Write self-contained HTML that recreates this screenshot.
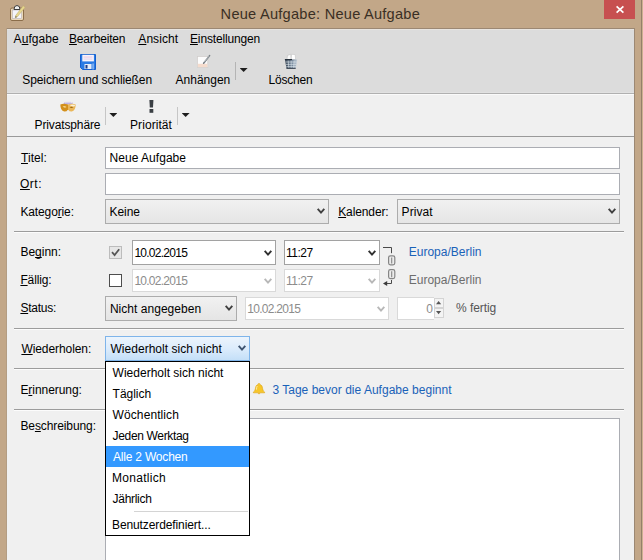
<!DOCTYPE html>
<html><head><meta charset="utf-8">
<style>
*{box-sizing:border-box;margin:0;padding:0}
html,body{width:643px;height:560px;overflow:hidden;background:#c2a788;font-family:"Liberation Sans",sans-serif;font-size:12px;color:#000}
.a{position:absolute}
.t{position:absolute;white-space:nowrap;line-height:20px;height:20px;font-size:12px;color:#000}
u{text-decoration:underline;text-underline-offset:1px;text-decoration-skip-ink:none;text-decoration-thickness:1px}
.inp{position:absolute;background:#fff;border:1px solid #abadb3}
.sel{position:absolute;background:linear-gradient(#f1f1f1,#e5e5e5);border:1px solid #acacac}
.hl{position:absolute;height:2px;background:#9c9c9c;border-bottom:1px solid #fcfcfc;left:14px;width:610px}
.arr{position:absolute;width:8px;height:4px;background:#1e1e1e;clip-path:polygon(0 0,100% 0,50% 100%)}
svg{position:absolute;overflow:visible}
</style></head><body>
<!-- frame -->
<div class="a" style="left:641px;top:0;width:1px;height:560px;background:#94806b"></div>
<div class="a" style="left:642px;top:0;width:1px;height:560px;background:#cdb191"></div>
<div class="a" style="left:6px;top:28px;width:629px;height:532px;background:#9c8873"></div>
<div class="a" style="left:6px;top:28px;width:1px;height:532px;background:#b39d83"></div>
<div class="a" id="close" style="left:604px;top:0;width:31px;height:19px;background:#c75050"></div>
<svg style="left:616px;top:6px" width="8" height="7" viewBox="0 0 8 7"><path d="M0.6,0.3 L7.4,6.7 M7.4,0.3 L0.6,6.7" stroke="#fff" stroke-width="1.7" fill="none"/></svg>
<!-- title icon -->
<svg style="left:10px;top:5px" width="15" height="16" viewBox="0 0 15 16">
<rect x="0.5" y="3" width="13" height="12.5" rx="1.5" fill="#ead8b8" stroke="#8b6d4a" stroke-width="1"/>
<rect x="2.5" y="5" width="9" height="8.5" fill="#f4f4fa" stroke="#b9b2b8" stroke-width="0.6"/>
<path d="M4,4.5 Q4,0.5 7,0.5 Q10,0.5 10,4.5 Z" fill="#f0f0f0" stroke="#3c3c3c" stroke-width="1"/>
<path d="M13.2,0.8 L5.6,10.6 L5.2,12.8 L7.2,12 L15,2.4 Z" fill="#e8d88f" stroke="#bcab6c" stroke-width="0.5"/>
<path d="M5.2,12.8 L5.7,10.9 L7,11.9 Z" fill="#555"/>
</svg>
<!-- content -->
<div class="a" style="left:7px;top:29px;width:627px;height:64px;background:#dcdcdc"></div>
<div class="a" style="left:7px;top:29px;width:627px;height:1px;background:#e7e4e0"></div>
<div class="a" style="left:7px;top:92px;width:627px;height:1px;background:#e1e1e1"></div><div class="a" style="left:7px;top:93px;width:627px;height:1px;background:#b0b0b0"></div>
<div class="a" style="left:7px;top:94px;width:627px;height:42px;background:#f0f0f0;border-top:1px solid #fafafa"></div>
<div class="a" style="left:7px;top:136px;width:627px;height:1px;background:#9a9a9a"></div>
<div class="a" style="left:7px;top:137px;width:627px;height:423px;background:#f0f0f0"></div>
<!-- toolbar1 icons -->
<svg style="left:80px;top:54px" width="16" height="16" viewBox="0 0 16 16">
<path d="M0.5,0.5 H15.5 V15.5 H2.5 L0.5,13.5 Z" fill="#2a7be4" stroke="#1560cf" stroke-width="1"/>
<rect x="2.3" y="0.8" width="11.6" height="6.6" fill="#f8f4fb"/>
<rect x="3.5" y="2.6" width="9" height="0.9" fill="#e4bfe0"/>
<rect x="3.5" y="4.6" width="9" height="0.9" fill="#d9cdea"/>
<rect x="4.5" y="10" width="7" height="5" fill="#e6edf8"/>
<rect x="5.5" y="11" width="2" height="3.5" fill="#1c3f8c"/>
<rect x="12.6" y="9.5" width="0.9" height="6" fill="#cfe2fb"/>
</svg>
<svg style="left:197px;top:55px" width="14" height="13" viewBox="0 0 14 13">
<rect x="0.4" y="1.4" width="10.4" height="11" fill="#fcfcfc" stroke="#d2cfcd" stroke-width="0.8"/>
<rect x="0.8" y="8.8" width="9.6" height="3.3" fill="#f5dccd"/>
<path d="M12.6,0.6 L6.6,8.2" stroke="#70777d" stroke-width="1.5" fill="none" stroke-linecap="round"/>
<path d="M12.2,0.9 L7.2,7.2" stroke="#e8ecef" stroke-width="0.5" fill="none"/>
</svg>
<svg style="left:284px;top:54px" width="15" height="15" viewBox="0 0 15 15">
<defs><linearGradient id="bk" x1="0" x2="1" y1="0" y2="0"><stop offset="0" stop-color="#3c4957"/><stop offset="0.55" stop-color="#6f8297"/><stop offset="1" stop-color="#c3ced8"/></linearGradient></defs>
<path d="M3,5.6 L3.4,1.4 L6.8,0.2 L7.2,5.6 Z" fill="#fafafa" stroke="#bdbdbd" stroke-width="0.6"/>
<path d="M7.2,5.6 L7.5,0.3 L11.2,0.6 L11.6,5.6 Z" fill="#ffffff" stroke="#c2c2c2" stroke-width="0.6"/>
<path d="M0.9,5.4 H13.3 L11.7,14.6 H2.5 Z" fill="url(#bk)"/>
<path d="M0.9,5.6 H8" stroke="#27313c" stroke-width="1.2"/>
<path d="M4.2,6.6 L4.8,14 M7.2,6.6 V14 M10.2,6.6 L9.6,14" stroke="#dfe7ee" stroke-width="0.8" fill="none" opacity="0.75"/>
<path d="M1.6,8 H12.8 M2,10.4 H12.4 M2.4,12.6 H12" stroke="#dfe7ee" stroke-width="0.8" fill="none" opacity="0.75"/>
<path d="M2.5,14.4 H11.7" stroke="#2f3a47" stroke-width="0.9"/>
</svg>
<div class="a" style="left:235px;top:62px;width:1px;height:18px;background:#b4b4b4"></div>
<div class="arr" style="left:239.6px;top:68px"></div>
<!-- toolbar2 icons -->
<svg style="left:60px;top:101px" width="16" height="11" viewBox="0 0 16 11">
<path d="M3.6,3.4 L4.2,1 L5.2,2.8 L6,0.4 L7,2.8 L8,0.4 L9,2.8 L10,0.4 L11,2.8 L12.2,1 L12.8,3.4 Z" fill="#b3a4de" opacity="0.9"/>
<path d="M0.3,3.4 Q4,2 8,3.6 L8,8.4 Q6.6,10.8 4.2,10.6 Q0.4,9.6 0.3,3.4 Z" fill="#d3901c"/>
<path d="M8,3.6 Q12,2 15.7,3.4 Q15.6,9.6 11.8,10.6 Q9.4,10.8 8,8.4 Z" fill="#eab75a"/>
<path d="M9.4,4 Q12.6,2.8 15.2,4 Q14.6,6 12.4,5.4 Q10.6,4.6 9.4,4 Z" fill="#fbf1d8"/>
<path d="M2.6,5.6 Q4.4,4.4 6.6,6 Q4.6,7.6 2.6,5.6 Z" fill="#f3d58e"/>
<path d="M9.6,6.2 Q11.6,5.2 13.4,6 Q11.6,7.8 9.6,6.2 Z" fill="#9a6414"/>
</svg>
<svg style="left:149px;top:100px" width="5" height="13" viewBox="0 0 5 13">
<path d="M0.4,0 H4.4 L4,7.6 H0.8 Z" fill="#3a3f44"/>
<rect x="0.5" y="9" width="3.8" height="3.8" fill="#3a3f44"/>
</svg>
<div class="a" style="left:105px;top:107px;width:1px;height:18px;background:#c6c6c6"></div>
<div class="arr" style="left:109.4px;top:113px"></div>
<div class="a" style="left:177px;top:107px;width:1px;height:18px;background:#c6c6c6"></div>
<div class="arr" style="left:181.6px;top:113px"></div>
<!-- form boxes -->
<div class="inp" style="left:105px;top:147px;width:515px;height:22px"></div>
<div class="inp" style="left:105px;top:173px;width:515px;height:22px"></div>
<div class="sel" style="left:105px;top:199px;width:224px;height:25px"></div>
<svg class="chev" style="left:317px;top:208px" width="8" height="6" viewBox="0 0 8 6"><path d="M0.7,0.9 L4,4.6 L7.3,0.9" stroke="#404040" stroke-width="1.9" fill="none"/></svg>
<div class="sel" style="left:397px;top:199px;width:223px;height:25px"></div>
<svg class="chev" style="left:608px;top:208px" width="8" height="6" viewBox="0 0 8 6"><path d="M0.7,0.9 L4,4.6 L7.3,0.9" stroke="#404040" stroke-width="1.9" fill="none"/></svg>
<div class="hl" style="top:231px"></div>
<!-- beginn -->
<div class="a" style="left:109px;top:246px;width:13px;height:13px;background:#e6e6e6;border:1px solid #bcbcbc"></div>
<svg style="left:111px;top:248px" width="9" height="9" viewBox="0 0 9 9"><path d="M1,4.2 L3.6,7 L8.2,1.2" stroke="#555" stroke-width="1.8" fill="none"/></svg>
<div class="inp" style="left:132px;top:240px;width:144px;height:25px;border-color:#a2a2a2"></div>
<svg class="chev" style="left:264px;top:250px" width="8" height="6" viewBox="0 0 8 6"><path d="M0.7,0.9 L4,4.6 L7.3,0.9" stroke="#303030" stroke-width="1.9" fill="none"/></svg>
<div class="inp" style="left:284px;top:240px;width:96px;height:25px;border-color:#a2a2a2"></div>
<svg class="chev" style="left:368px;top:250px" width="8" height="6" viewBox="0 0 8 6"><path d="M0.7,0.9 L4,4.6 L7.3,0.9" stroke="#303030" stroke-width="1.9" fill="none"/></svg>
<!-- link icon -->
<svg style="left:383px;top:246px" width="14" height="42" viewBox="0 0 14 42">
<path d="M0,1.5 H8.5 V7.2" stroke="#4a4a4a" stroke-width="1" fill="none"/>
<rect x="5.6" y="9.8" width="6.2" height="9" rx="1.8" fill="#ececec" stroke="#858585" stroke-width="1.2"/>
<path d="M8.7,11.4 V17.4" stroke="#858585" stroke-width="1.1"/>
<rect x="5.6" y="23.6" width="6.2" height="9" rx="1.8" fill="#ececec" stroke="#858585" stroke-width="1.2"/>
<path d="M8.7,25.2 V31.2" stroke="#858585" stroke-width="1.1"/>
<path d="M8.5,34 V37.5 H2" stroke="#4a4a4a" stroke-width="1" fill="none"/>
<path d="M0,37.5 L4.2,35 V40 Z" fill="#3a3a3a"/>
</svg>
<!-- fällig -->
<div class="a" style="left:109px;top:274px;width:13px;height:13px;background:#fff;border:1px solid #4d4d4d"></div>
<div class="inp" style="left:132px;top:269px;width:144px;height:23px;border-color:#d9d9d9"></div>
<svg class="chev" style="left:264px;top:278px" width="8" height="6" viewBox="0 0 8 6"><path d="M0.7,0.9 L4,4.6 L7.3,0.9" stroke="#b8b8b8" stroke-width="1.9" fill="none"/></svg>
<div class="inp" style="left:284px;top:269px;width:96px;height:23px;border-color:#d9d9d9"></div>
<svg class="chev" style="left:368px;top:278px" width="8" height="6" viewBox="0 0 8 6"><path d="M0.7,0.9 L4,4.6 L7.3,0.9" stroke="#b8b8b8" stroke-width="1.9" fill="none"/></svg>
<!-- status -->
<div class="sel" style="left:105px;top:296px;width:132px;height:25px"></div>
<svg class="chev" style="left:225px;top:305px" width="8" height="6" viewBox="0 0 8 6"><path d="M0.7,0.9 L4,4.6 L7.3,0.9" stroke="#404040" stroke-width="1.9" fill="none"/></svg>
<div class="inp" style="left:245px;top:297px;width:144px;height:23px;border-color:#d9d9d9"></div>
<svg class="chev" style="left:377px;top:306px" width="8" height="6" viewBox="0 0 8 6"><path d="M0.7,0.9 L4,4.6 L7.3,0.9" stroke="#b8b8b8" stroke-width="1.9" fill="none"/></svg>
<div class="inp" style="left:397px;top:297px;width:37px;height:23px;border-color:#d9d9d9;border-right:0"></div>
<div class="a" style="left:434px;top:298px;width:10px;height:10px;background:#f4f4f4;border:1px solid #d4d4d4"></div>
<div class="a" style="left:434px;top:308px;width:10px;height:10px;background:#f4f4f4;border:1px solid #d4d4d4"></div>
<svg style="left:436px;top:301px" width="5" height="3" viewBox="0 0 5 3"><path d="M0,3.2 L2.6,0 L5.2,3.2 Z" fill="#555"/></svg>
<svg style="left:436px;top:310.6px" width="5" height="3" viewBox="0 0 5 3"><path d="M0,0 L2.6,3.2 L5.2,0 Z" fill="#555"/></svg>
<div class="hl" style="top:328px"></div>
<!-- wiederholen -->
<div class="sel" style="left:105px;top:336px;width:145px;height:25px;border-color:#7eb4ea;background:linear-gradient(#ecf4fc,#dcecfc 50%,#c4dff8)"></div>
<svg class="chev" style="left:238px;top:345px" width="8" height="6" viewBox="0 0 8 6"><path d="M0.7,0.9 L4,4.6 L7.3,0.9" stroke="#3f5470" stroke-width="1.9" fill="none"/></svg>
<div class="hl" style="top:368px"></div>
<!-- bell -->
<svg style="left:253px;top:383px" width="12" height="12" viewBox="0 0 12 12">
<path d="M6,0.4 Q6.9,0.4 6.9,1.4 Q9.6,2.2 9.6,5.6 Q9.8,8 11.6,9 L11.6,9.8 H0.4 L0.4,9 Q2.2,8 2.4,5.6 Q2.4,2.2 5.1,1.4 Q5.1,0.4 6,0.4 Z" fill="#f7c62a" stroke="#dba315" stroke-width="0.6"/>
<path d="M4.6,10.2 Q6,12.4 7.4,10.2 Z" fill="#e7a91a"/>
<path d="M4.2,3 Q3.4,4.6 3.5,6.6" stroke="#fdeaa0" stroke-width="1" fill="none"/>
</svg>
<div class="hl" style="top:409px"></div>
<div class="inp" style="left:105px;top:418px;width:515px;height:160px"></div>
<!-- popup -->
<div class="a" style="left:105px;top:361px;width:145px;height:175px;background:#fff;border:1px solid #000"></div>
<div class="a" style="left:106px;top:446px;width:143px;height:21px;background:#3399ff"></div>
<div class="a" style="left:134px;top:511px;width:114px;height:1px;background:#d4d4d4"></div>
<div class="t" style="left:220.60px;top:4.00px;font-size:14.6px;letter-spacing:0.244px;color:#3a2f24">Neue Aufgabe: Neue Aufgabe</div>
<div class="t" style="left:13.60px;top:29.00px;font-size:12px;letter-spacing:0.067px;color:#000">A<u>u</u>fgabe</div>
<div class="t" style="left:69.00px;top:29.00px;font-size:12px;letter-spacing:-0.167px;color:#000"><u>B</u>earbeiten</div>
<div class="t" style="left:138.30px;top:29.00px;font-size:12px;letter-spacing:0.067px;color:#000"><u>A</u>nsicht</div>
<div class="t" style="left:190.00px;top:29.00px;font-size:12px;letter-spacing:-0.150px;color:#000"><u>E</u>instellungen</div>
<div class="t" style="left:22.30px;top:70.00px;font-size:12px;letter-spacing:-0.105px;color:#000">Speichern und schließen</div>
<div class="t" style="left:175.60px;top:70.00px;font-size:12px;letter-spacing:-0.014px;color:#000">Anhängen</div>
<div class="t" style="left:268.60px;top:70.00px;font-size:12px;letter-spacing:-0.217px;color:#000">Löschen</div>
<div class="t" style="left:34.60px;top:115.00px;font-size:12px;letter-spacing:-0.136px;color:#000">Privatsphäre</div>
<div class="t" style="left:130.00px;top:115.00px;font-size:12px;letter-spacing:0.075px;color:#000">Priorität</div>
<div class="t" style="left:21.00px;top:148.00px;font-size:12px;letter-spacing:0.060px;color:#000"><u>T</u>itel:</div>
<div class="t" style="left:109.60px;top:148.00px;font-size:12px;letter-spacing:0.027px;color:#000">Neue Aufgabe</div>
<div class="t" style="left:20.00px;top:174.00px;font-size:12px;letter-spacing:0.500px;color:#000"><u>O</u>rt:</div>
<div class="t" style="left:20.40px;top:202.00px;font-size:12px;letter-spacing:-0.122px;color:#000">Katego<u>r</u>ie:</div>
<div class="t" style="left:109.60px;top:202.00px;font-size:12px;letter-spacing:-0.100px;color:#000">Keine</div>
<div class="t" style="left:338.20px;top:202.00px;font-size:12px;letter-spacing:-0.112px;color:#000"><u>K</u>alender:</div>
<div class="t" style="left:401.60px;top:202.00px;font-size:12px;letter-spacing:0.080px;color:#000">Privat</div>
<div class="t" style="left:20.40px;top:242.00px;font-size:12px;letter-spacing:0.000px;color:#000">Be<u>g</u>inn:</div>
<div class="t" style="left:134.40px;top:243.00px;font-size:12px;letter-spacing:-0.733px;color:#000">10.02.2015</div>
<div class="t" style="left:285.90px;top:243.00px;font-size:12px;letter-spacing:-0.475px;color:#000">11:27</div>
<div class="t" style="left:408.70px;top:242.00px;font-size:12px;letter-spacing:0.008px;color:#1a62b8">Europa/Berlin</div>
<div class="t" style="left:20.40px;top:270.00px;font-size:12px;letter-spacing:-0.117px;color:#000"><u>F</u>ällig:</div>
<div class="t" style="left:134.40px;top:271.00px;font-size:12px;letter-spacing:-0.733px;color:#8c8c8c">10.02.2015</div>
<div class="t" style="left:285.90px;top:271.00px;font-size:12px;letter-spacing:-0.475px;color:#8c8c8c">11:27</div>
<div class="t" style="left:408.70px;top:270.00px;font-size:12px;letter-spacing:0.008px;color:#6d6d6d">Europa/Berlin</div>
<div class="t" style="left:20.40px;top:298.00px;font-size:12px;letter-spacing:-0.233px;color:#000"><u>S</u>tatus:</div>
<div class="t" style="left:109.90px;top:299.00px;font-size:12px;letter-spacing:0.036px;color:#000">Nicht angegeben</div>
<div class="t" style="left:247.20px;top:299.00px;font-size:12px;letter-spacing:-0.700px;color:#8c8c8c">10.02.2015</div>
<div class="t" style="left:426.30px;top:299.00px;font-size:12px;letter-spacing:-0.300px;color:#8c8c8c">0</div>
<div class="t" style="left:456.00px;top:298.00px;font-size:12px;letter-spacing:-0.057px;color:#555">% fertig</div>
<div class="t" style="left:21.40px;top:339.00px;font-size:12px;letter-spacing:-0.073px;color:#000"><u>W</u>iederholen:</div>
<div class="t" style="left:110.50px;top:339.00px;font-size:12px;letter-spacing:0.025px;color:#000">Wiederholt sich nicht</div>
<div class="t" style="left:20.40px;top:380.00px;font-size:12px;letter-spacing:-0.050px;color:#000">E<u>r</u>innerung:</div>
<div class="t" style="left:272.40px;top:380.00px;font-size:12px;letter-spacing:0.019px;color:#1a62b8">3 Tage bevor die Aufgabe beginnt</div>
<div class="t" style="left:20.40px;top:416.00px;font-size:12px;letter-spacing:-0.092px;color:#000">Be<u>s</u>chreibung:</div>
<div class="t" style="left:112.60px;top:363.00px;font-size:12px;letter-spacing:0.005px;color:#000">Wiederholt sich nicht</div>
<div class="t" style="left:112.60px;top:384.00px;font-size:12px;letter-spacing:-0.017px;color:#000">Täglich</div>
<div class="t" style="left:112.60px;top:405.00px;font-size:12px;letter-spacing:0.090px;color:#000">Wöchentlich</div>
<div class="t" style="left:112.60px;top:426.00px;font-size:12px;letter-spacing:-0.342px;color:#000">Jeden Werktag</div>
<div class="t" style="left:113.00px;top:447.00px;font-size:12px;letter-spacing:-0.200px;color:#fff">Alle 2 Wochen</div>
<div class="t" style="left:112.00px;top:468.00px;font-size:12px;letter-spacing:0.300px;color:#000">Monatlich</div>
<div class="t" style="left:112.60px;top:489.00px;font-size:12px;letter-spacing:-0.300px;color:#000">Jährlich</div>
<div class="t" style="left:112.00px;top:515.00px;font-size:12px;letter-spacing:-0.105px;color:#000">Benutzerdefiniert...</div>
</body></html>
